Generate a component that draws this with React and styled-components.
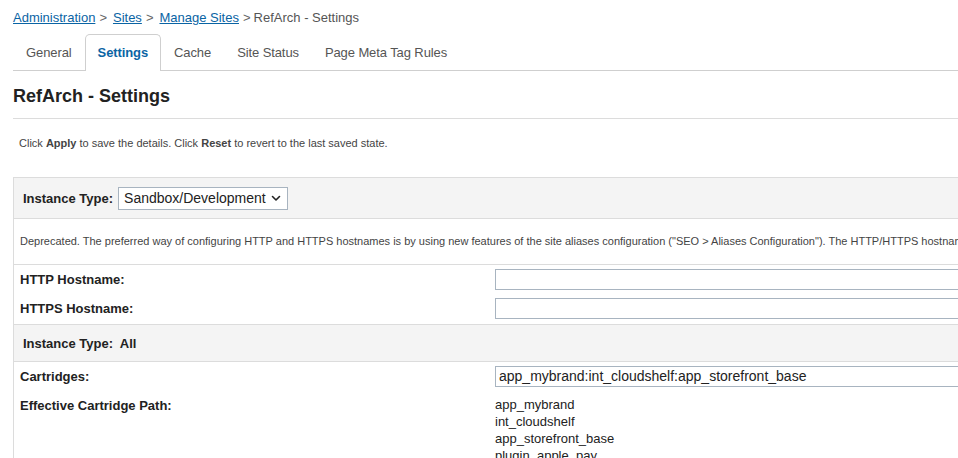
import React from 'react';
import styled, {createGlobalStyle} from 'styled-components';

const GlobalStyle = createGlobalStyle`
    html, body {
        margin: 0;
        padding: 0;
        background: #fff;
        overflow: hidden;
    }
    body {
        font-family: "Liberation Sans", Arial, Helvetica, sans-serif;
        color: #333;
    }
`;

const Page = styled.div`
    width: 1200px;
    padding: 10px 0 0 13px;
    box-sizing: border-box;
`;

const Breadcrumb = styled.div`
    font-size: 13px;
    line-height: 16px;
    color: #555;
    height: 24px;
    a {
        color: #0a64a4;
        text-decoration: underline;
    }
    span.sep {
        margin: 0 6px 0 4px;
        color: #666;
    }
`;

const TabBar = styled.div`
    display: flex;
    border-bottom: 1px solid #cfcfcf;
    height: 36px;
`;

const Tab = styled.div`
    padding: 0 12px;
    display: flex;
    align-items: center;
    font-size: 13px;
    color: ${props => (props.$active ? '#0a64a4' : '#555')};
    font-weight: ${props => (props.$active ? 'bold' : 'normal')};
    border: 1px solid ${props => (props.$active ? '#cfcfcf' : 'transparent')};
    border-bottom: none;
    border-radius: 5px 5px 0 0;
    background: ${props => (props.$active ? '#fff' : 'transparent')};
    margin-bottom: ${props => (props.$active ? '-1px' : '0')};
    height: ${props => (props.$active ? '37px' : '36px')};
    padding-bottom: ${props => (props.$active ? '2px' : '1px')};
    box-sizing: border-box;
    letter-spacing: -0.1px;
`;

const Heading = styled.h1`
    margin: 0;
    font-size: 18px;
    font-weight: bold;
    color: #222;
    height: 47px;
    line-height: 50px;
    border-bottom: 1px solid #dcdcdc;
`;

const Hint = styled.p`
    margin: 0;
    font-size: 11px;
    color: #444;
    padding: 17px 0 0 6px;
    height: 41px;
    line-height: 14px;
    b {
        font-weight: bold;
    }
`;

const Form = styled.div`
    border-left: 1px solid #dcdcdc;
    border-top: 1px solid #dcdcdc;
`;

const GroupHeader = styled.div`
    display: flex;
    align-items: center;
    background: #f4f4f4;
    height: ${props => props.$height}px;
    padding-left: 9px;
    border-bottom: 1px solid #dcdcdc;
    font-size: 13px;
    font-weight: bold;
    color: #222;
    gap: 5px;
`;

const Select = styled.div`
    display: flex;
    align-items: center;
    justify-content: space-between;
    width: 170px;
    height: 23px;
    box-sizing: border-box;
    border: 1px solid #a8b4c0;
    background: #fff;
    padding: 0 6px 0 5px;
    font-size: 14px;
    font-weight: normal;
    color: #222;
`;

const Note = styled.div`
    font-size: 11px;
    color: #444;
    height: 45px;
    line-height: 45px;
    padding-left: 6px;
    white-space: nowrap;
    overflow: hidden;
    border-bottom: 1px solid #dcdcdc;
`;

const Fields = styled.div`
    display: grid;
    grid-template-columns: 481px 1fr;
    row-gap: 8px;
    padding: ${props => props.$pad};
    border-bottom: ${props => (props.$last ? 'none' : '1px solid #dcdcdc')};
`;

const Label = styled.div`
    font-size: 13px;
    font-weight: bold;
    color: #222;
    padding-left: 6px;
    height: 21px;
    line-height: 22px;
`;

const TextInput = styled.div`
    height: 21px;
    box-sizing: border-box;
    border: 1px solid #a8b4c0;
    background: #fff;
    font-size: 14px;
    line-height: 19px;
    padding-left: 3px;
    color: #222;
`;

const PathList = styled.ul`
    list-style: none;
    margin: 0;
    padding: 0;
    font-size: 13px;
    line-height: 17px;
    color: #222;
    margin-top: 1px;
`;

const Chevron = () => (
    <svg width="10" height="7" viewBox="0 0 10 7">
        <path d="M1.5 1.5 L5 5 L8.5 1.5" fill="none" stroke="#222" strokeWidth="1.6" strokeLinecap="round" strokeLinejoin="round" />
    </svg>
);

const tabs = ['General', 'Settings', 'Cache', 'Site Status', 'Page Meta Tag Rules'];
const cartridges = ['app_mybrand', 'int_cloudshelf', 'app_storefront_base', 'plugin_apple_pay'];

const App = () => {
    return (
        <>
            <GlobalStyle />
            <Page>
                <Breadcrumb>
                    <a href="#">Administration</a><span className="sep">&gt;</span>
                    <a href="#">Sites</a><span className="sep">&gt;</span>
                    <a href="#">Manage Sites</a><span className="sep" style={{marginRight: 3}}>&gt;</span>
                    RefArch - Settings
                </Breadcrumb>
                <TabBar>
                    {tabs.map(tab => (
                        <Tab key={tab} $active={tab === 'Settings'}>{tab}</Tab>
                    ))}
                </TabBar>
                <Heading>RefArch - Settings</Heading>
                <Hint>Click <b>Apply</b> to save the details. Click <b>Reset</b> to revert to the last saved state.</Hint>
                <Form>
                    <GroupHeader $height={40}>
                        Instance Type:
                        <Select>Sandbox/Development <Chevron /></Select>
                    </GroupHeader>
                    <Note>
                        Deprecated. The preferred way of configuring HTTP and HTTPS hostnames is by using new features of the site aliases configuration ("SEO &gt; Aliases Configuration"). The HTTP/HTTPS hostnames settings will be removed in a future release.
                    </Note>
                    <Fields $pad="4px 0 5px 0">
                        <Label>HTTP Hostname:</Label>
                        <TextInput />
                        <Label>HTTPS Hostname:</Label>
                        <TextInput />
                    </Fields>
                    <GroupHeader $height={36}>Instance Type:&nbsp; All</GroupHeader>
                    <Fields $pad="4px 0 0 0" $last>
                        <Label>Cartridges:</Label>
                        <TextInput>app_mybrand:int_cloudshelf:app_storefront_base</TextInput>
                        <Label>Effective Cartridge Path:</Label>
                        <PathList>
                            {cartridges.map(c => <li key={c}>{c}</li>)}
                        </PathList>
                    </Fields>
                </Form>
            </Page>
        </>
    );
};

export default App;
